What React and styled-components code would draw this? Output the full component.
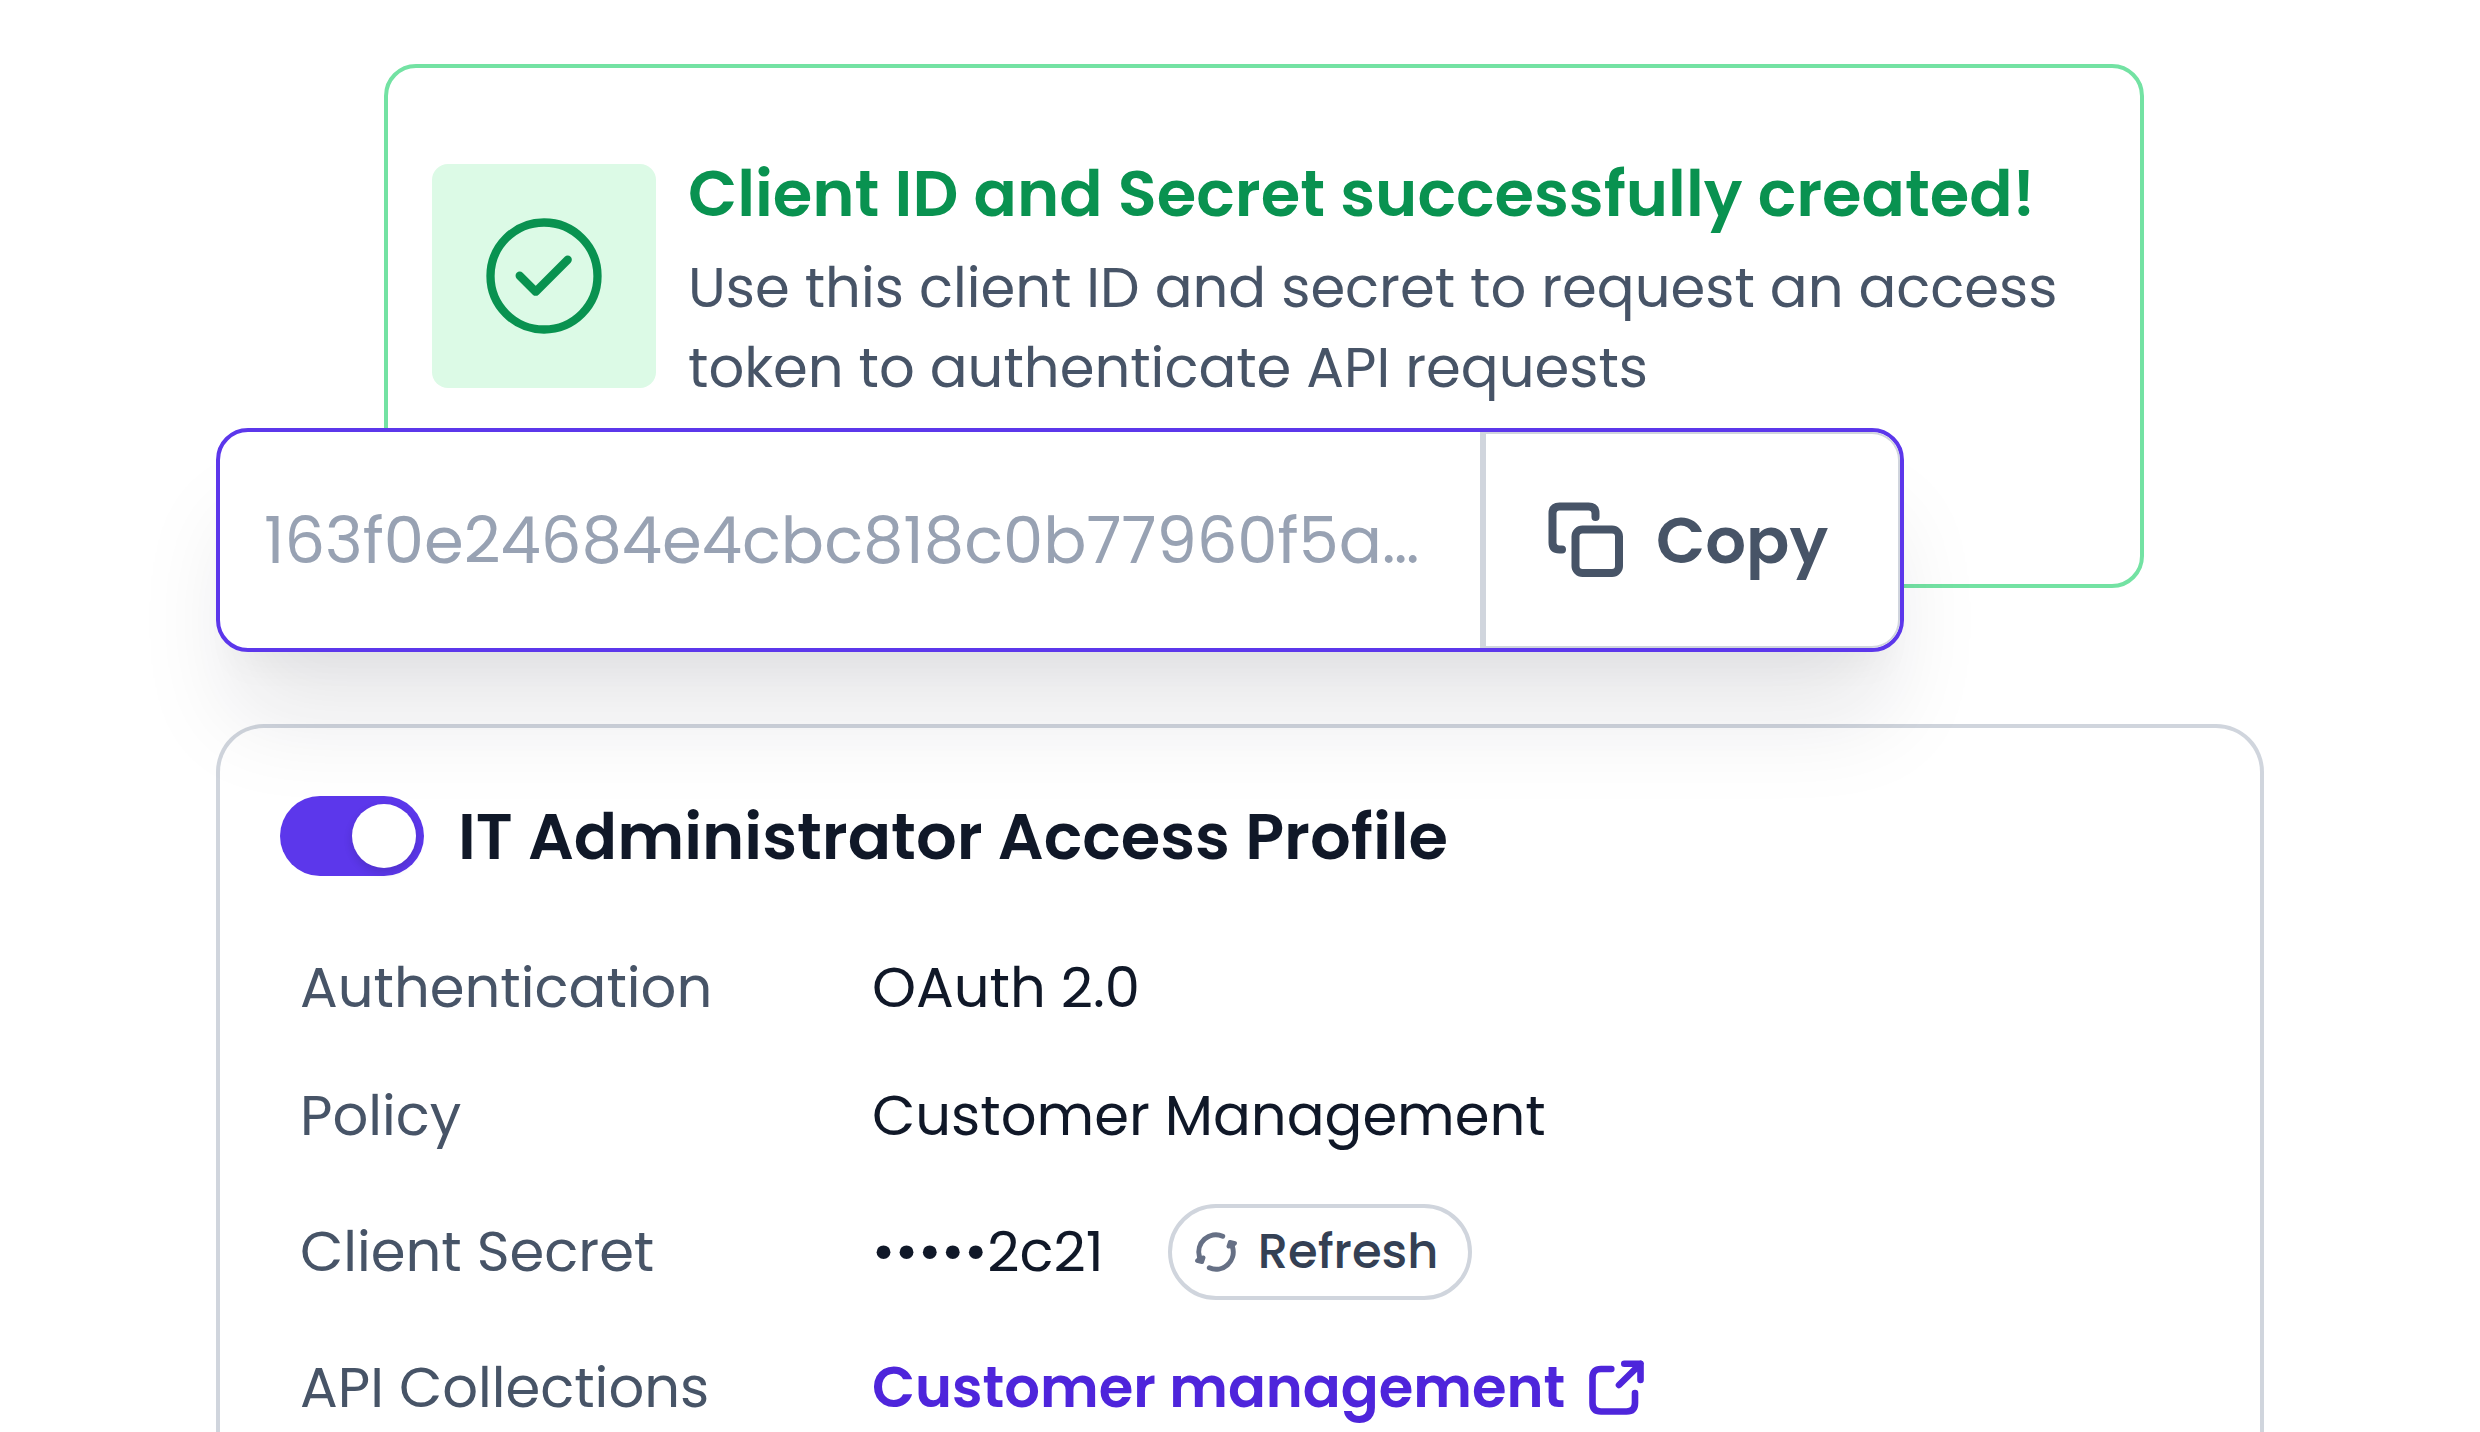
import styled, { createGlobalStyle } from 'styled-components'

const GlobalStyle = createGlobalStyle`
	* {
		box-sizing: border-box;
	}
	body {
		margin: 0;
		background: #ffffff;
		font-family: Poppins, Inter, 'Open Sans', sans-serif;
		overflow: hidden;
	}
`

export default function App() {
	return (
		<>
			<GlobalStyle />
			<Page>
				<SuccessCard role='status'>
					<IconTile>
						<CheckIcon />
					</IconTile>
					<div>
						<Title className='Green'>
							Client ID and Secret successfully created!
						</Title>
						<Message>
							Use this client ID and secret to request an access
							<br />
							token to authenticate API requests
						</Message>
					</div>
				</SuccessCard>

				<CopyField>
					<CopyInput
						aria-label='Client ID'
						readOnly
						defaultValue='163f0e24684e4cbc818c0b77960f5a…'
					/>
					<CopyButton type='button'>
						<CopyIcon />
						Copy
					</CopyButton>
				</CopyField>

				<ProfileCard>
					<ProfileHeader>
						<Toggle id='profile' type='checkbox' role='switch' defaultChecked />
						<Title as='label' htmlFor='profile'>
							IT Administrator Access Profile
						</Title>
					</ProfileHeader>
					<Details>
						{details.map((item) => (
							<DetailRow key={item.label} $height={item.height}>
								<dt>{item.label}</dt>
								<dd>{item.value}</dd>
							</DetailRow>
						))}
					</Details>
				</ProfileCard>
			</Page>
		</>
	)
}

function CheckIcon() {
	return (
		<svg width='116' height='116' viewBox='0 0 116 116' fill='none' aria-hidden='true'>
			<g stroke='currentColor' strokeWidth='8.3' strokeLinecap='round' strokeLinejoin='round'>
				<circle cx='58' cy='58' r='53.5' />
				<path d='M33.7 57.7 L49.7 73.7 L81.7 41.7' />
			</g>
		</svg>
	)
}

function CopyIcon() {
	return (
		<svg width='76' height='76' viewBox='0 0 76 76' fill='none' aria-hidden='true'>
			<g stroke='currentColor' strokeWidth='8' strokeLinecap='round'>
				<rect x='27.5' y='27.5' width='43.5' height='43.5' rx='7' />
				<path d='M47.5 15 V11.5 Q47.5 4.5 40.5 4.5 H11.5 Q4.5 4.5 4.5 11.5 V40.5 Q4.5 47.5 11.5 47.5 H14' />
			</g>
		</svg>
	)
}

function RefreshIcon() {
	return (
		<svg width='44' height='44' viewBox='0 0 44 44' fill='none' aria-hidden='true'>
			<g stroke='currentColor' strokeWidth='5' strokeLinecap='round' strokeLinejoin='round'>
				<path d='M28.7 6.2 A17.2 17.2 0 0 0 5.5 27' />
				<path d='M15.3 37.8 A17.2 17.2 0 0 0 38.5 17' />
			</g>
			<g fill='currentColor' stroke='currentColor' strokeWidth='4' strokeLinejoin='round'>
				<path d='M9.5 27.5 L8 32 L3 30.7 L6 28 Z' />
				<path d='M34.5 16.5 L36 12 L41 13.3 L38 16 Z' />
			</g>
		</svg>
	)
}

function LinkIcon() {
	return (
		<svg width='56' height='56' viewBox='0 0 56 56' fill='none' aria-hidden='true'>
			<g stroke='currentColor' strokeWidth='6.6' strokeLinecap='round' strokeLinejoin='round'>
				<path d='M22.3 9 H12 Q3.5 9 3.5 17.5 V43 Q3.5 51.5 12 51.5 H37.5 Q46 51.5 46 43 V33' />
				<path d='M30 25 L51.5 3.8 M35.3 3.8 H51.5 V20' />
			</g>
		</svg>
	)
}

const Page = styled.main`
	display: flex;
	flex-direction: column;
	padding: 64px 216px 0;
	height: 100vh;
	overflow: hidden;
`

const Title = styled.h2`
	margin: 0;
	padding-top: 2px;
	color: #101828;
	font-size: 64px;
	line-height: 96px;
	font-weight: 600;
	white-space: nowrap;
	&.Green {
		color: #099250;
	}
`

const SuccessCard = styled.section`
	display: flex;
	gap: 32px;
	flex-shrink: 0;
	margin: 0 120px 0 168px;
	height: 524px;
	padding: 76px 44px;
	border: 4px solid #73e2a3;
	border-radius: 32px;
	> div:first-child {
		margin-top: 20px;
	}
`

const IconTile = styled.div`
	display: flex;
	justify-content: center;
	align-items: center;
	width: 224px;
	height: 224px;
	flex-shrink: 0;
	border-radius: 16px;
	color: #099250;
	background: #dcfae6;
`

const Message = styled.p`
	margin: 6px 0 0;
	color: #475467;
	font-size: 56px;
	line-height: 80px;
	white-space: nowrap;
`

/* sits over the lower edge of the success card */
const CopyField = styled.div`
	position: relative;
	z-index: 1;
	display: flex;
	flex-shrink: 0;
	height: 224px;
	margin: -160px 360px 0 0;
	border: 4px solid #5c37eb;
	border-radius: 32px;
	overflow: hidden;
	background: #ffffff;
	box-shadow: 0 80px 96px -16px rgba(16, 24, 40, 0.1),
		0 32px 32px -16px rgba(16, 24, 40, 0.03);
`

const CopyInput = styled.input`
	flex: 1;
	min-width: 0;
	padding: 0 44px;
	border: 0;
	outline: 0;
	background: transparent;
	color: #98a2b3;
	font-family: inherit;
	font-size: 64px;
`

const CopyButton = styled.button`
	display: flex;
	align-items: center;
	gap: 32px;
	width: 420px;
	padding: 0 0 0 62px;
	border: 2px solid #d0d5dd;
	border-left-width: 6px;
	border-radius: 0 28px 28px 0;
	background: #ffffff;
	color: #475467;
	font-family: inherit;
	font-size: 64px;
	font-weight: 600;
`

const ProfileCard = styled.section`
	flex: 1 0 auto;
	margin-top: 72px;
	padding: 59px 60px;
	border: 4px solid #d0d5dd;
	border-bottom: 0;
	border-radius: 48px 48px 0 0;
`

const ProfileHeader = styled.div`
	display: flex;
	align-items: center;
	gap: 34px;
`

const Toggle = styled.input`
	display: flex;
	justify-content: flex-end;
	appearance: none;
	flex-shrink: 0;
	width: 144px;
	height: 80px;
	margin: 0;
	padding: 8px;
	border-radius: 40px;
	background: #5c37eb;
	&::before {
		content: '';
		width: 64px;
		height: 64px;
		border-radius: 50%;
		background: #ffffff;
		box-shadow: 0 4px 8px rgba(16, 24, 40, 0.16);
	}
`

const Details = styled.dl`
	margin: 39px 0 0;
	padding-left: 20px;
	font-size: 56px;
	line-height: 80px;
`

const DetailRow = styled.div`
	display: grid;
	grid-template-columns: 572px 1fr;
	align-items: center;
	height: ${(props) => props.$height}px;
	white-space: nowrap;
	dt {
		color: #475467;
	}
	dd {
		display: flex;
		align-items: center;
		margin: 0;
		color: #101828;
	}
`

const Secret = styled.span`
	margin-right: 64px;
`

const RefreshButton = styled.button`
	display: flex;
	align-items: center;
	gap: 20px;
	height: 96px;
	padding: 0 30px 0 22px;
	border: 4px solid #d0d5dd;
	border-radius: 48px;
	background: #ffffff;
	color: #667085;
	font-family: inherit;
	font-size: 48px;
	font-weight: 500;
	span {
		color: #344054;
	}
`

const CollectionLink = styled.a`
	display: flex;
	align-items: center;
	gap: 24px;
	color: #4e25db;
	font-weight: 600;
	text-decoration: none;
`

const details = [
	{ label: 'Authentication', height: 128, value: 'OAuth 2.0' },
	{ label: 'Policy', height: 128, value: 'Customer Management' },
	{
		label: 'Client Secret',
		height: 144,
		value: (
			<>
				<Secret>•••••2c21</Secret>
				<RefreshButton type='button'>
					<RefreshIcon />
					<span>Refresh</span>
				</RefreshButton>
			</>
		),
	},
	{
		label: 'API Collections',
		height: 128,
		value: (
			<CollectionLink href='#collections'>
				Customer management
				<LinkIcon />
			</CollectionLink>
		),
	},
]
